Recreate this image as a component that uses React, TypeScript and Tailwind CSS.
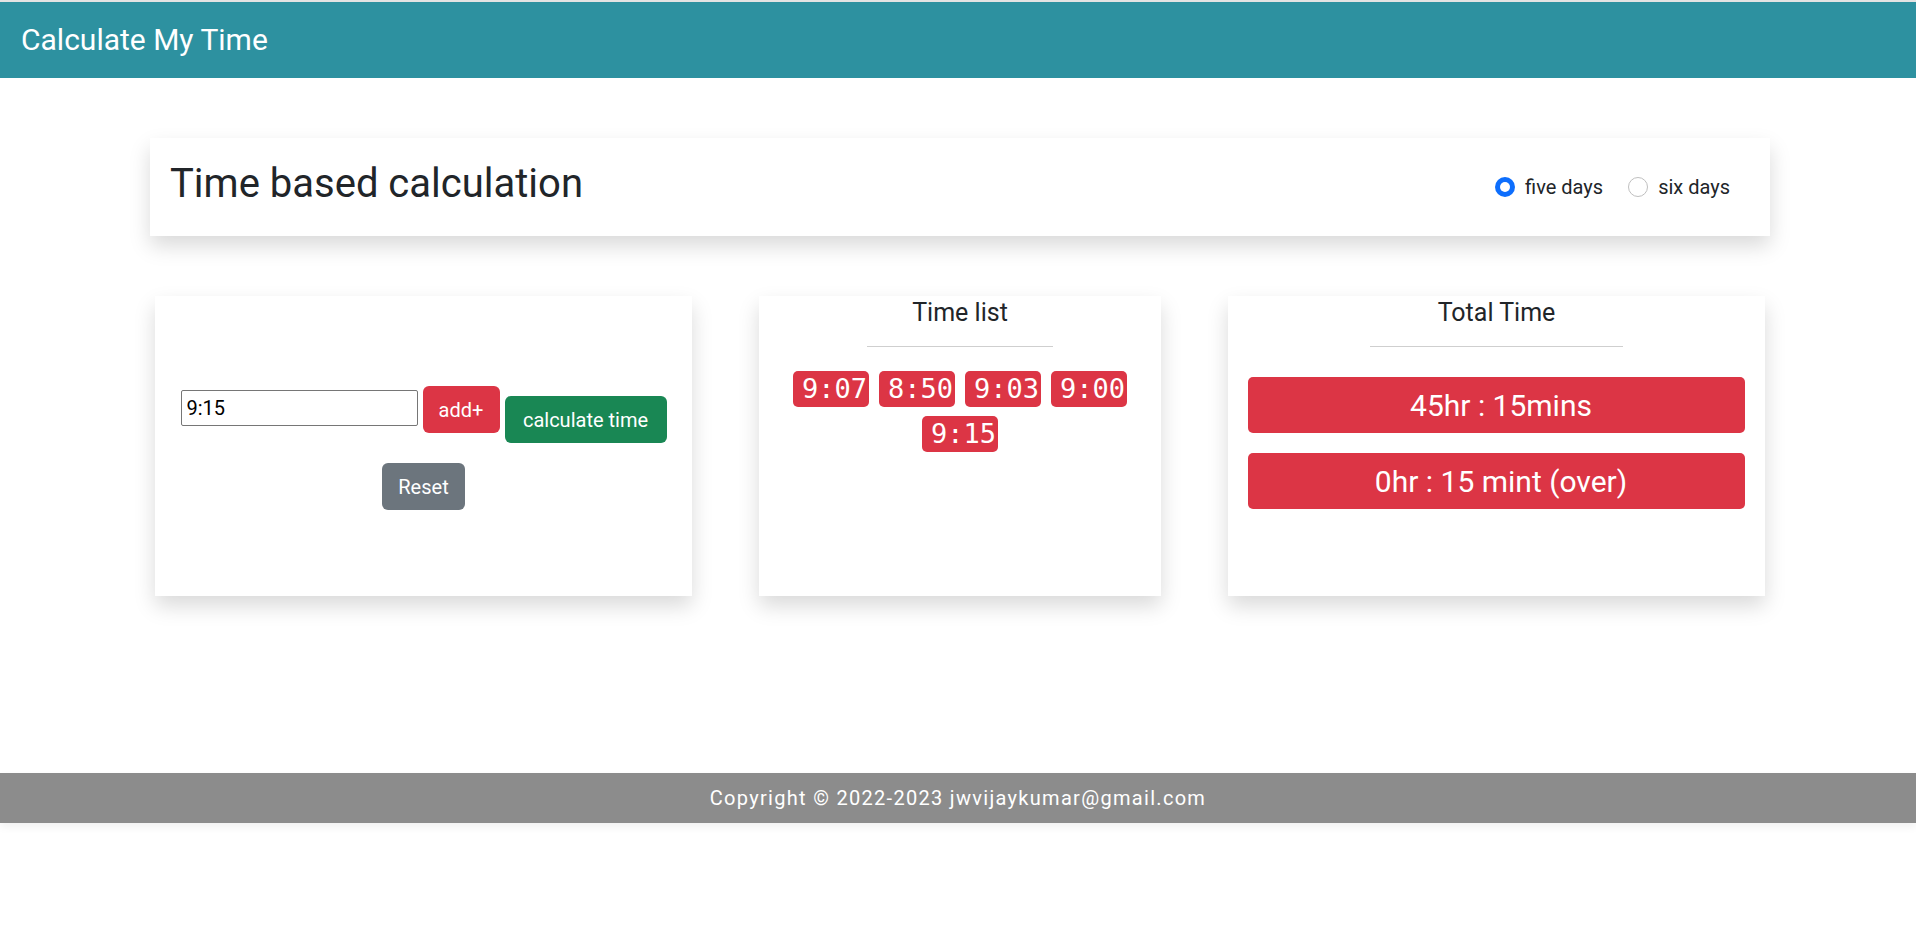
import React, { useState } from 'react';

interface RadioOptionProps {
  label: string;
  checked: boolean;
  onSelect: () => void;
  className?: string;
}

const RadioOption: React.FC<RadioOptionProps> = ({ label, checked, onSelect, className }) => (
  <label className={`flex items-center cursor-pointer ${className || ''}`} onClick={onSelect}>
    {checked ? (
      <span className="w-[20px] h-[20px] rounded-full bg-[#0d6efd] flex items-center justify-center">
        <span className="w-[10px] h-[10px] rounded-full bg-white" />
      </span>
    ) : (
      <span className="w-[20px] h-[20px] rounded-full border border-[#bfbfbf] bg-white" />
    )}
    <span className="ml-[10px] text-[20px] leading-[30px] text-[#212529]">{label}</span>
  </label>
);

const TimeBadge: React.FC<{ value: string }> = ({ value }) => (
  <span
    className="w-[76px] h-[36px] rounded-[5px] bg-[#dc3545] text-white text-[27px] leading-[36px] pl-[9px] whitespace-nowrap overflow-hidden"
    style={{ fontFamily: '"DejaVu Sans Mono", "Liberation Mono", monospace' }}
  >
    {value}
  </span>
);

export default function App() {
  const [days, setDays] = useState<'five' | 'six'>('five');
  const [input, setInput] = useState('9:15');
  const [times, setTimes] = useState<string[]>(['9:07', '8:50', '9:03', '9:00', '9:15']);

  const totals = ['45hr : 15mins', '0hr : 15 mint (over)'];

  const handleAdd = () => {
    if (input.trim()) setTimes([...times, input.trim()]);
  };

  const handleReset = () => {
    setTimes([]);
    setInput('');
  };

  return (
    <div className="min-h-[937px] bg-white" style={{ fontFamily: 'Roboto, "Noto Sans", Arial, sans-serif' }}>
      <div className="h-[2px] bg-[#e3e3e3]" />
      <header className="h-[76px] bg-[#2d91a0] flex items-center px-[21px]">
        <span className="text-white text-[30px] leading-[36px]">Calculate My Time</span>
      </header>

      <main className="ml-[150px] w-[1620px]">
        <div className="mt-[60px] h-[98px] bg-white shadow-[0_10px_20px_rgba(0,0,0,0.15)] flex items-center justify-between px-[20px]">
          <h1 className="text-[40px] leading-[48px] text-[#212529] mb-[10px] mt-[4px]">Time based calculation</h1>
          <div className="flex items-center pr-[20px]">
            <RadioOption label="five days" checked={days === 'five'} onSelect={() => setDays('five')} className="mr-[25px]" />
            <RadioOption label="six days" checked={days === 'six'} onSelect={() => setDays('six')} />
          </div>
        </div>

        <div className="mt-[60px] px-[5px] flex justify-between">
          {/* input card */}
          <div className="w-[537px] h-[300px] bg-white shadow-[0_10px_20px_rgba(0,0,0,0.15)] flex flex-col items-center justify-center pt-[4px]">
            <div className="flex items-start">
              <input
                value={input}
                onChange={(e) => setInput(e.target.value)}
                className="w-[237px] h-[36px] mt-[4px] border border-[#767676] rounded-[2px] px-[5px] text-[20px] text-black outline-none"
                style={{ fontFamily: 'Roboto, sans-serif' }}
              />
              <button
                onClick={handleAdd}
                className="ml-[5px] w-[77px] h-[47px] rounded-[6px] bg-[#dc3545] text-white text-[20px] leading-[30px]"
              >
                add+
              </button>
              <button className="ml-[5px] mt-[10px] w-[162px] h-[47px] px-[15px] rounded-[6px] bg-[#198754] text-white text-[20px] leading-[30px]">
                calculate time
              </button>
            </div>
            <button
              onClick={handleReset}
              className="mt-[20px] w-[83px] h-[47px] rounded-[6px] bg-[#6c757d] text-white text-[20px] leading-[30px]"
            >
              Reset
            </button>
          </div>

          {/* time list */}
          <div className="w-[402px] h-[300px] bg-white shadow-[0_10px_20px_rgba(0,0,0,0.15)] flex flex-col items-center px-[15px] pt-[2px]">
            <h5 className="text-[25px] leading-[30px] text-[#212529]">Time list</h5>
            <div className="mt-[18px] w-[186px] h-px bg-[#cfcfcf]" />
            <div className="mt-[24px] flex flex-wrap justify-center gap-x-[10px] gap-y-[9px]">
              {times.map((t, i) => (
                <TimeBadge key={i} value={t} />
              ))}
            </div>
          </div>

          {/* totals */}
          <div className="w-[537px] h-[300px] bg-white shadow-[0_10px_20px_rgba(0,0,0,0.15)] flex flex-col items-center px-[20px] pt-[2px]">
            <h5 className="text-[25px] leading-[30px] text-[#212529]">Total Time</h5>
            <div className="mt-[18px] w-[253px] h-px bg-[#cfcfcf]" />
            <div className="mt-[30px] w-full flex flex-col gap-[20px]">
              {totals.map((t) => (
                <div key={t} className="h-[56px] rounded-[5px] bg-[#dc3545] text-white text-[30px] leading-[45px] flex items-center justify-center pl-[9px]">
                  {t}
                </div>
              ))}
            </div>
          </div>
        </div>
      </main>

      <footer className="mt-[177px] h-[50px] bg-[#8c8c8c] shadow-[0_4px_8px_rgba(0,0,0,0.06)] flex items-center justify-center">
        <span className="text-white text-[20px] tracking-[1.3px]">Copyright © 2022-2023 jwvijaykumar@gmail.com</span>
      </footer>
    </div>
  );
}
